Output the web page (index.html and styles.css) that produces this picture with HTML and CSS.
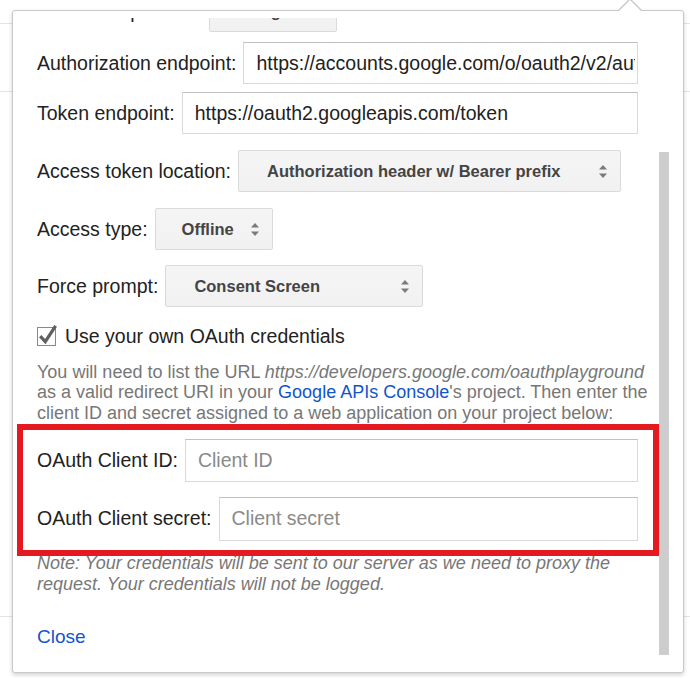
FILE: index.html
```html
<!DOCTYPE html>
<html lang="en">
<head>
<meta charset="utf-8">
<title>OAuth 2.0 configuration</title>
<link rel="stylesheet" href="styles.css">
</head>
<body>
<div class="backdrop">
  <div class="band band--top"></div>
  <div class="band band--mid"></div>
  <div class="band band--main"></div>
</div>

<div class="popup">
  <div class="viewport">
    <div class="content">
      <div class="row row--endpoints">
        <span class="label">OAuth endpoints:</span>
        <div class="select select--endpoints"><span>Google</span>
          <svg class="arrows" width="10" height="15" viewBox="0 0 10 15"><path d="M1 5.5L5 1L9 5.5Z"/><path d="M1 9.5L5 14L9 9.5Z"/></svg>
        </div>
      </div>
      <div class="row row--auth">
        <span class="label">Authorization endpoint:</span>
        <input class="field" type="text" value="https://accounts.google.com/o/oauth2/v2/auth">
      </div>
      <div class="row row--token">
        <span class="label">Token endpoint:</span>
        <input class="field" type="text" value="https://oauth2.googleapis.com/token">
      </div>
      <div class="row row--loc">
        <span class="label">Access token location:</span>
        <div class="select select--loc"><span>Authorization header w/ Bearer prefix</span>
          <svg class="arrows" width="10" height="15" viewBox="0 0 10 15"><path d="M1 5.5L5 1L9 5.5Z"/><path d="M1 9.5L5 14L9 9.5Z"/></svg>
        </div>
      </div>
      <div class="row row--type">
        <span class="label">Access type:</span>
        <div class="select select--type"><span>Offline</span>
          <svg class="arrows" width="10" height="15" viewBox="0 0 10 15"><path d="M1 5.5L5 1L9 5.5Z"/><path d="M1 9.5L5 14L9 9.5Z"/></svg>
        </div>
      </div>
      <div class="row row--prompt">
        <span class="label">Force prompt:</span>
        <div class="select select--prompt"><span>Consent Screen</span>
          <svg class="arrows" width="10" height="15" viewBox="0 0 10 15"><path d="M1 5.5L5 1L9 5.5Z"/><path d="M1 9.5L5 14L9 9.5Z"/></svg>
        </div>
      </div>
      <label class="check-row">
        <svg class="checkbox" width="19" height="19" viewBox="0 0 19 19">
          <rect x="0.5" y="0.5" width="18" height="18" fill="#fff" stroke="#4d90fe"/>
          <path d="M3.2 9.2L8.3 14.6L18.6 -1.2" fill="none" stroke="#5f5f5f" stroke-width="3.2"/>
        </svg>
        <span class="check-label">Use your own OAuth credentials</span>
      </label>
      <p class="help">You will need to list the URL <i>https://developers.google.com/oauthplayground</i> as a valid redirect URI in your <a class="link" href="#">Google APIs Console</a>'s project. Then enter the client ID and secret assigned to a web application on your project below:</p>
      <div class="row row--cid">
        <span class="label">OAuth Client ID:</span>
        <input class="field" type="text" placeholder="Client ID">
      </div>
      <div class="row row--csec">
        <span class="label">OAuth Client secret:</span>
        <input class="field" type="text" placeholder="Client secret">
      </div>
      <p class="note">Note: Your credentials will be sent to our server as we need to proxy the request. Your credentials will not be logged.</p>
      <div class="close-row"><a class="link" href="#">Close</a></div>
    </div>
  </div>
  <div class="thumb"></div>
</div>

<div class="highlight"></div>
</body>
</html>
```

FILE: styles.css
```css
html, body {
  margin: 0;
  padding: 0;
  background: #fff;
}

body {
  width: 690px;
  height: 678px;
  overflow: hidden;
  position: relative;
  font-family: "Liberation Sans", Arial, sans-serif;
  color: #222;
}

/* underlying page */
.backdrop {
  display: flex;
  flex-direction: column;
}

.band {
  border-bottom: 1px solid #e3e3e3;
}

.band--top { height: 23px; }
.band--mid { height: 67px; }
.band--main { height: 524px; }

/* popup */
.popup {
  position: absolute;
  left: 12px;
  top: 10px;
  width: 670px;
  height: 661px;
  background: #fff;
  border: 1px solid #c9c9c9;
  border-radius: 3px;
  box-shadow: 0 2px 4px rgba(0, 0, 0, 0.18);
}

.popup::before,
.popup::after {
  content: "";
  position: absolute;
  width: 0;
  height: 0;
  border-style: solid;
  border-color: transparent;
}

.popup::before {
  left: 605px;
  top: -13px;
  border-width: 0 12px 12px 12px;
  border-bottom-color: #c9c9c9;
}

.popup::after {
  left: 606px;
  top: -11px;
  border-width: 0 11px 11px 11px;
  border-bottom-color: #fff;
}

.viewport {
  margin-top: 7px;
  height: 639px;
  overflow: hidden;
  padding: 0 45px 0 24px;
}

.thumb {
  position: absolute;
  left: 646px;
  top: 141px;
  width: 10px;
  height: 503px;
  background: #cdcdcd;
}

.content {
  display: flex;
  flex-direction: column;
  margin-top: -28px;
}

.row {
  display: flex;
  align-items: center;
  gap: 7px;
  height: 42px;
  flex: none;
}

.label {
  font-size: 19.5px;
  color: #222;
  white-space: nowrap;
}

.row--auth { margin-top: 10px; }
.row--token { margin-top: 8px; }
.row--loc { margin-top: 16px; }
.row--type { margin-top: 16px; }
.row--prompt { margin-top: 15px; }
.row--cid { margin-top: 16px; height: 43px; }
.row--csec { margin-top: 15px; height: 44px; }

.field {
  flex: 1;
  min-width: 0;
  height: 100%;
  box-sizing: border-box;
  margin: 0;
  padding: 0 2px 0 12px;
  border: 1px solid #d9d9d9;
  border-top-color: #c0c0c0;
  border-radius: 0;
  background: #fff;
  font-family: "Liberation Sans", Arial, sans-serif;
  font-size: 19.5px;
  color: #222;
  outline: none;
}

.field::placeholder {
  color: #8a8a8a;
}

.select {
  display: flex;
  align-items: center;
  height: 42px;
  box-sizing: border-box;
  padding: 0 12px 0 28px;
  background: linear-gradient(#f5f5f5, #f1f1f1);
  border: 1px solid #dadada;
  border-radius: 2px;
  font-size: 16.5px;
  font-weight: bold;
  color: #444;
  white-space: nowrap;
}

.select .arrows {
  margin-left: auto;
  fill: #7a7a7a;
  flex: none;
}

.select--endpoints { width: 128px; margin-left: 14px; }
.select--loc { width: 383px; }
.select--type { width: 118px; padding-left: 26px; }
.select--prompt { width: 258px; }

.check-row {
  display: flex;
  align-items: center;
  gap: 9px;
  height: 24px;
  margin-top: 17px;
}

.checkbox {
  overflow: visible;
  flex: none;
}

.check-label {
  font-size: 19.5px;
  color: #222;
}

.help {
  margin: 14px -18px 0 0;
  font-size: 18px;
  line-height: 20.3px;
  color: #777;
}

.help i {
  font-style: italic;
}

.link {
  color: #15c;
  text-decoration: none;
}

.note {
  margin: 12px 0 0 0;
  font-size: 18px;
  line-height: 21px;
  font-style: italic;
  color: #777;
}

.close-row {
  margin-top: 30px;
  font-size: 19px;
  line-height: 24px;
}

/* annotation */
.highlight {
  position: absolute;
  left: 17px;
  top: 424px;
  width: 630px;
  height: 120px;
  border: 6px solid #e51a20;
}
```
